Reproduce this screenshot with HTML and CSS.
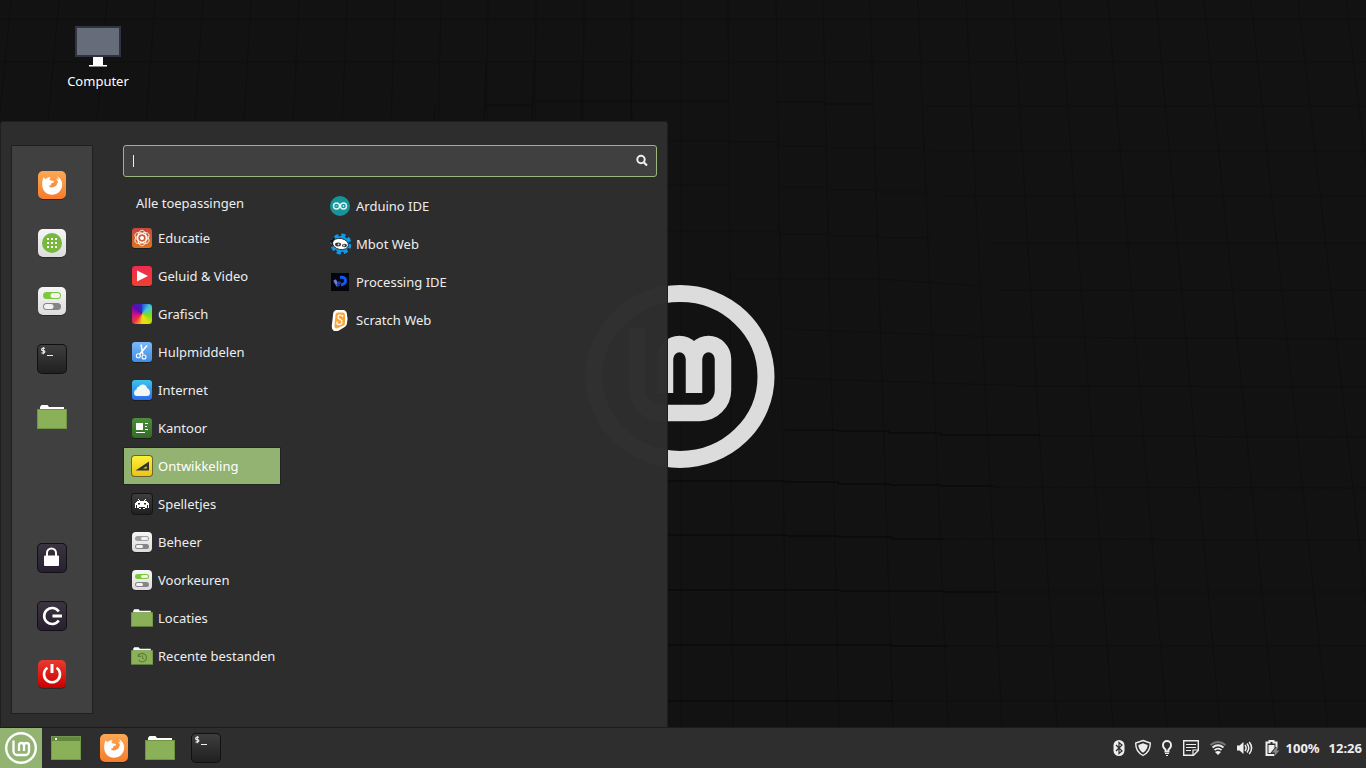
FILE: index.html
```html
<!DOCTYPE html>
<html lang="nl">
<head>
<meta charset="utf-8">
<title>Bureaublad</title>
<link rel="stylesheet" href="styles.css">
</head>
<body>
<svg class="defs" aria-hidden="true">
  <defs>
    <linearGradient id="g-orange" x1="0" y1="0" x2="0" y2="1"><stop offset="0" stop-color="#fca854"/><stop offset="1" stop-color="#f67c2c"/></linearGradient>
    <linearGradient id="g-light" x1="0" y1="0" x2="0" y2="1"><stop offset="0" stop-color="#f6f6f6"/><stop offset="1" stop-color="#dcdcdc"/></linearGradient>
    <linearGradient id="g-dark" x1="0" y1="0" x2="0" y2="1"><stop offset="0" stop-color="#3e3e3e"/><stop offset="1" stop-color="#202020"/></linearGradient>
    <linearGradient id="g-violet" x1="0" y1="0" x2="0" y2="1"><stop offset="0" stop-color="#3a3340"/><stop offset="1" stop-color="#28202e"/></linearGradient>
    <linearGradient id="g-red" x1="0" y1="0" x2="0" y2="1"><stop offset="0" stop-color="#ea3a2e"/><stop offset="1" stop-color="#c90000"/></linearGradient>
    <linearGradient id="g-edu" x1="0" y1="0" x2="0" y2="1"><stop offset="0" stop-color="#c8473c"/><stop offset="1" stop-color="#dc7422"/></linearGradient>
    <linearGradient id="g-media" x1="0" y1="0" x2="0" y2="1"><stop offset="0" stop-color="#ee2a50"/><stop offset="1" stop-color="#f04030"/></linearGradient>
    <linearGradient id="g-tools" x1="0" y1="0" x2="0" y2="1"><stop offset="0" stop-color="#7ab8fa"/><stop offset="1" stop-color="#3f8ee0"/></linearGradient>
    <linearGradient id="g-net" x1="0" y1="0" x2="0" y2="1"><stop offset="0" stop-color="#3cc4ea"/><stop offset="1" stop-color="#2a6cf0"/></linearGradient>
    <linearGradient id="g-office" x1="0" y1="0" x2="0" y2="1"><stop offset="0" stop-color="#4a8e3a"/><stop offset="1" stop-color="#336a28"/></linearGradient>
    <linearGradient id="g-dev" x1="0" y1="0" x2="0" y2="1"><stop offset="0" stop-color="#fdf03a"/><stop offset="1" stop-color="#ecc418"/></linearGradient>
    <symbol id="i-firefox" viewBox="0 0 32 32">
      <rect x="2" y="3" width="28" height="28" rx="5" fill="#1c1c1c" opacity=".6"/>
      <rect x="2" y="2" width="28" height="28" rx="5" fill="url(#g-orange)"/>
      <path fill="#fff" d="M7.600 8.300L9.500 10.200C11 8.800 12.600 8.200 14.600 8.400C13.800 9.400 13.500 10.400 13.800 11.200L18 12C18.200 13.200 16.800 14 15.200 14.600L15 16.200C13.800 16 12.800 16.600 13.200 17.600C14.400 19 17 18.800 18.600 17.600C20.400 17 21.400 15.400 21 13.600L22 14.600C22.200 12 21 10.400 19.800 9.400C21 9.500 22 10.200 22.600 11C22.600 9.400 21.800 8.200 20.800 7.200C23.800 8.400 26.400 11.800 26.200 16C26 21.500 21.500 25.800 16 25.800C10.500 25.800 6.300 21.500 6.200 16C6 13 6.700 10.500 7.600 8.300Z"/>
    </symbol>
    <symbol id="i-toggles" viewBox="0 0 32 32">
      <rect x="2" y="3" width="28" height="28" rx="5" fill="#1c1c1c" opacity=".6"/>
      <rect x="2" y="2" width="28" height="28" rx="5" fill="url(#g-light)"/>
      <rect x="7" y="7" width="18" height="7" rx="3.500" fill="currentColor"/>
      <rect x="14.500" y="8" width="9.500" height="5" rx="2.500" fill="#f2f2f2"/>
      <rect x="7" y="18" width="18" height="7" rx="3.500" fill="#858585"/>
      <rect x="8" y="19" width="9.500" height="5" rx="2.500" fill="#f2f2f2"/>
    </symbol>
    <symbol id="i-toggles-small" viewBox="0 0 22 22">
      <rect x="1" y="2" width="20" height="20" rx="4" fill="#1c1c1c" opacity=".7"/>
      <rect x="1" y="1" width="20" height="20" rx="4" fill="url(#g-light)"/>
      <rect x="4" y="5" width="14" height="5" rx="2.500" fill="currentColor"/>
      <rect x="10" y="6" width="7" height="3" rx="1.500" fill="#f2f2f2"/>
      <rect x="4" y="13" width="14" height="5" rx="2.500" fill="#858585"/>
      <rect x="5" y="14" width="7" height="3" rx="1.500" fill="#f2f2f2"/>
    </symbol>
    <symbol id="i-terminal" viewBox="0 0 32 32">
      <rect x="1" y="1" width="30" height="30" rx="5" fill="#111"/>
      <rect x="2" y="2" width="28" height="28" rx="4" fill="url(#g-dark)"/>
      <path d="M9 5.200H6.800Q5.600 5.200 5.600 6.400T6.800 7.600H7.700Q8.900 7.600 8.900 8.800T7.700 10H5.400M7.300 4V11.200M11 12.500H17" fill="none" stroke="#eee" stroke-width="1.100"/>
    </symbol>
    <symbol id="i-folder" viewBox="0 0 32 32">
      <path d="M4 10V6L5.500 4H11.500L13 6H28V10Z" fill="#fff"/>
      <path d="M1 8H31V28H1Z" fill="#6f9444"/>
      <path d="M2 9H30V27H2Z" fill="#8bb158"/>
    </symbol>
    <symbol id="i-mint" viewBox="0 0 190 184">
      <ellipse cx="95" cy="92.500" rx="86" ry="83" fill="none" stroke="currentColor" stroke-width="17"/>
      <path d="M80 109V75a14.500 15 0 0 1 29 0V109M109 75a14.500 15 0 0 1 29 0V106a23 23 0 0 1-23 23H76a24 24 0 0 1-24-24V44" fill="none" stroke="currentColor" stroke-width="16.500"/>
    </symbol>
  </defs>
</svg>

<main class="desktop">
  <svg class="wallpaper" viewBox="0 0 1366 768" preserveAspectRatio="xMidYMid slice" aria-hidden="true">
    <rect width="1366" height="768" fill="#121212"/>
    <g fill="none" stroke="#0f0f0f">
      <path d="M11 0L-60 726M59 0L-7 726M107 0L48 726M155 0L102 726M203 0L156 726M251 0L210 726M299 0L264 726M347 0L318 726M395 0L372 726M441 0L426 726M488 0L480 726M536 0L530 726M584 0L580 726M632 0L630 726M681 0L681 726M728 0L733 726M776 0L787 726M823 0L839 726M870 0L893 726M918 0L948 726M966 0L1002 726M1013 0L1057 726M1060 0L1113 726M1108 0L1167 726M1156 0L1220 726M1204 0L1275 726M1251 0L1328 726M1298 0L1380 726M1346 0L1434 726"/>
      <path d="M0 19H1366M0 62H1366M925 106H1366M930 151H1366M940 196H1366M990 243H1366M1000 290H1366M784 329L1000 337L1366 339M784 378L1030 386L1366 387M1040 436L1366 437M994 487L1366 488M944 539L1366 540M998 592H1366M948 646H1366M893 701H1366"/>
    </g>
    <g fill="none" stroke="#0c0c0c">
      <path d="M486 62L484 121M534 60L532 121M582 60L581 121M631 58V121M435 106L434 121M484 105H532M532 101H728M776 102H824V104H872"/>
      <path d="M668 141H728M728 142H778M778 146H828M828 148H925M668 185H728M779 187H829M829 190H879M879 192H928M668 231H780V234H830V236H880V238H932M733 279H880L980 286" stroke="#0e0e0e"/>
      <path d="M785 430H837V431H889V433H941V435H1040" stroke="#090909"/>
    </g>
    <g fill="none" stroke="#070707">
      <path d="M668 481H785V482H838V484H890V485H942V486H994M668 535H787V536H839V537H892V539H944M668 590H840V591H944V592H998M668 645H892V646H948M668 701H893"/>
    </g>
    <use href="#i-mint" x="585" y="284" width="190" height="184" color="#dcdcdc"/>
  </svg>

  <a class="desktop-icon" href="#computer">
    <svg width="48" height="48" viewBox="0 0 48 48" aria-hidden="true">
      <rect x="1" y="4" width="46" height="31" fill="#303440"/>
      <rect x="3" y="6" width="42" height="27" fill="#666c7a"/>
      <path d="M19 35H29V43H33V44.500H15V43H19Z" fill="#fff"/>
    </svg>
    <span>Computer</span>
  </a>

  <section class="menu" aria-label="Menu">
    <aside class="sidebar">
      <div class="sidebar-group">
        <button class="launcher" aria-label="Firefox"><svg class="icon-l"><use href="#i-firefox"/></svg></button>
        <button class="launcher" aria-label="Programmabeheer">
          <svg class="icon-l" viewBox="0 0 32 32">
            <rect x="2" y="3" width="28" height="28" rx="5" fill="#1c1c1c" opacity=".6"/>
            <rect x="2" y="2" width="28" height="28" rx="5" fill="url(#g-light)"/>
            <circle cx="16" cy="16" r="10" fill="#78b83e"/>
            <path d="M11 12H21M11 16H21M11 20H21" stroke="#fff" stroke-width="2" stroke-dasharray="2 2"/>
          </svg>
        </button>
        <button class="launcher green" aria-label="Systeeminstellingen"><svg class="icon-l"><use href="#i-toggles"/></svg></button>
        <button class="launcher" aria-label="Terminal"><svg class="icon-l"><use href="#i-terminal"/></svg></button>
        <button class="launcher" aria-label="Bestanden"><svg class="icon-l"><use href="#i-folder"/></svg></button>
      </div>
      <div class="sidebar-group">
        <button class="launcher" aria-label="Scherm vergrendelen">
          <svg class="icon-l" viewBox="0 0 32 32">
            <rect x="1" y="1" width="30" height="30" rx="5" fill="#141018"/>
            <rect x="2" y="2" width="28" height="28" rx="4" fill="url(#g-violet)"/>
            <path d="M11 14V11a4.500 4.500 0 0 1 9 0V14" fill="none" stroke="#fff" stroke-width="2"/>
            <rect x="8" y="13.500" width="15" height="10.500" rx="1" fill="#fff"/>
          </svg>
        </button>
        <button class="launcher" aria-label="Afmelden">
          <svg class="icon-l" viewBox="0 0 32 32">
            <rect x="1" y="1" width="30" height="30" rx="5" fill="#141018"/>
            <rect x="2" y="2" width="28" height="28" rx="4" fill="url(#g-violet)"/>
            <path d="M22.800 11.500A8 8 0 1 0 22.800 20.500" fill="none" stroke="#fff" stroke-width="2.600"/>
            <path d="M16.500 16H26" stroke="#fff" stroke-width="3"/>
          </svg>
        </button>
        <button class="launcher" aria-label="Afsluiten">
          <svg class="icon-l" viewBox="0 0 32 32">
            <rect x="2" y="3" width="28" height="28" rx="5" fill="#1c1c1c" opacity=".6"/>
            <rect x="2" y="2" width="28" height="28" rx="5" fill="url(#g-red)"/>
            <path d="M11.500 9.700A8 8 0 1 0 20.500 9.700" fill="none" stroke="#fff" stroke-width="2.600"/>
            <path d="M16 6V15" stroke="#fff" stroke-width="3"/>
          </svg>
        </button>
      </div>
    </aside>

    <div class="pane">
      <label class="search">
        <span class="caret"></span>
        <input type="text" aria-label="Zoeken">
        <svg width="16" height="16" viewBox="0 0 16 16" aria-hidden="true"><circle cx="7" cy="6.500" r="3.700" fill="none" stroke="#eee" stroke-width="2"/><path d="M9.700 9.200L13 12.500" stroke="#eee" stroke-width="2.200"/></svg>
      </label>
      <div class="lists">
        <nav class="categories" aria-label="Categorieën">
          <button class="entry entry-all">Alle toepassingen</button>
          <button class="entry">
            <svg class="icon-s" viewBox="0 0 22 22"><rect x="1" y="1" width="20" height="21" rx="3" fill="#1d1d1d"/><rect x="1" y="1" width="20" height="20" rx="3" fill="url(#g-edu)"/><circle cx="11" cy="11" r="2" fill="#fff"/><circle cx="11" cy="11" r="4.400" fill="none" stroke="#fff" stroke-width="1.200"/><g fill="none" stroke="#fff" stroke-width=".8"><ellipse cx="11" cy="11" rx="4.400" ry="7.800"/><ellipse cx="11" cy="11" rx="4.400" ry="7.800" transform="rotate(60 11 11)"/><ellipse cx="11" cy="11" rx="4.400" ry="7.800" transform="rotate(120 11 11)"/></g></svg>
            Educatie</button>
          <button class="entry">
            <svg class="icon-s" viewBox="0 0 22 22"><rect x="1" y="1" width="20" height="21" rx="3" fill="#1d1d1d"/><rect x="1" y="1" width="20" height="20" rx="3" fill="url(#g-media)"/><path d="M6 5.500L17 11L6 16.500Z" fill="#fff"/></svg>
            Geluid &amp; Video</button>
          <button class="entry"><span class="icon-s rainbow"></span>Grafisch</button>
          <button class="entry">
            <svg class="icon-s" viewBox="0 0 22 22"><rect x="1" y="1" width="20" height="21" rx="3" fill="#1d1d1d"/><rect x="1" y="1" width="20" height="20" rx="3" fill="url(#g-tools)"/><path d="M10 3.500L11.800 13.500M16 4.500L8.500 13.500" stroke="#fff" stroke-width="1.500"/><circle cx="7.300" cy="14.800" r="2" fill="none" stroke="#fff" stroke-width="1.100"/><circle cx="13" cy="16" r="2" fill="none" stroke="#fff" stroke-width="1.100"/></svg>
            Hulpmiddelen</button>
          <button class="entry">
            <svg class="icon-s" viewBox="0 0 22 22"><rect x="1" y="1" width="20" height="21" rx="3" fill="#1d1d1d"/><rect x="1" y="1" width="20" height="20" rx="3" fill="url(#g-net)"/><path d="M6 17Q3 17 3 14Q3 11 5.500 10.500Q5.500 8 8 7.500Q9.500 5 12.500 5.500Q15.500 6 16 9Q19 10.500 19 13.500Q19 17 16 17Z" fill="#f4f6f6"/></svg>
            Internet</button>
          <button class="entry">
            <svg class="icon-s" viewBox="0 0 22 22"><rect x="1" y="1" width="20" height="21" rx="3" fill="#1d1d1d"/><rect x="1" y="1" width="20" height="20" rx="3" fill="url(#g-office)"/><path d="M5 6H12V13H5Z" fill="#fff"/><path d="M14 6.500H17M14 9.500H16M14 12.500H17M5 15.500H14" stroke="#fff"/></svg>
            Kantoor</button>
          <button class="entry entry-selected">
            <svg class="icon-s" viewBox="0 0 22 22"><rect width="22" height="22" rx="4" fill="#6c6330"/><rect x="1" y="1" width="20" height="20" rx="3" fill="url(#g-dev)"/><path fill-rule="evenodd" d="M4.500 15.500L18 6.500V15.500ZM12 13.500H15.700V11.200Z" fill="#333"/></svg>
            Ontwikkeling</button>
          <button class="entry">
            <svg class="icon-s" viewBox="0 0 22 22"><rect width="22" height="22" rx="4" fill="#151515"/><rect x="1" y="1" width="20" height="20" rx="3" fill="url(#g-dark)"/><path fill-rule="evenodd" d="M7 6H8V7H9V8H13V7H14V6H15V7H14V8H16V9H17V10H18V15H17V12H16V15H14V16H12V15H14V14H8V15H10V16H8V15H6V12H5V15H4V10H5V9H6V8H8V7H7ZM7 10V11.500H9V10ZM13 10V11.500H15V10Z" fill="#fff"/></svg>
            Spelletjes</button>
          <button class="entry grey"><svg class="icon-s"><use href="#i-toggles-small"/></svg>Beheer</button>
          <button class="entry green"><svg class="icon-s"><use href="#i-toggles-small"/></svg>Voorkeuren</button>
          <button class="entry"><svg class="icon-s" viewBox="1 1 30 30"><use href="#i-folder" width="32" height="32"/></svg>Locaties</button>
          <button class="entry">
            <svg class="icon-s" viewBox="1 1 30 30"><use href="#i-folder" width="32" height="32"/><path d="M11 16A5.800 5.800 0 1 1 11.500 21.500M11 13V16.500H14.500M16.500 15V18.500L18.500 20" fill="none" stroke="#5c7d38" stroke-width="1.500"/></svg>
            Recente bestanden</button>
        </nav>
        <div class="apps">
          <button class="entry">
            <svg class="icon-s" viewBox="0 0 22 22"><circle cx="11" cy="11" r="10" fill="#159499"/><circle cx="7.500" cy="11" r="3" fill="none" stroke="#e4f4f4" stroke-width="1.400"/><circle cx="14.500" cy="11" r="3" fill="none" stroke="#e4f4f4" stroke-width="1.400"/><path d="M6.500 11H8.500M13.500 11H15.500M14.500 10V12" stroke="#e4f4f4" stroke-width=".7"/></svg>
            Arduino IDE</button>
          <button class="entry">
            <svg class="icon-s" viewBox="0 0 22 22"><circle cx="12" cy="11" r="8" fill="#0d9bea"/><circle cx="12" cy="11" r="8.500" fill="none" stroke="#0d9bea" stroke-width="4" stroke-dasharray="4 2.675"/><path d="M1 8L5 5L7 8L4 12Z" fill="#111"/><ellipse cx="11.500" cy="11" rx="8" ry="5.500" transform="rotate(12 11.500 11)" fill="#fff" stroke="#111" stroke-width=".8"/><ellipse cx="9" cy="11.500" rx="3" ry="1.900" fill="#333"/><ellipse cx="15.500" cy="12.500" rx="2.500" ry="1.800" fill="#333"/><circle cx="9.500" cy="11.500" r=".9" fill="#ddd"/><circle cx="15" cy="12.500" r=".9" fill="#ddd"/></svg>
            Mbot Web</button>
          <button class="entry">
            <svg class="icon-s" viewBox="0 0 22 22"><rect x="2" y="2" width="18" height="18" fill="#04040c"/><path d="M5.500 9L9 15" stroke="#6d7ce0" stroke-width="3"/><path d="M8.500 15L11 10.500" stroke="#203a9a" stroke-width="3"/><path d="M11 6.500Q16.500 5.500 16.500 9.500Q16.500 13 12 14" fill="none" stroke="#0a5cf5" stroke-width="3"/></svg>
            Processing IDE</button>
          <button class="entry">
            <svg class="icon-s" viewBox="0 0 22 22"><path d="M7 1H15Q18 2 18 6Q19 9 18 14Q18 17 14 19L9 22H5Q2 20 3 15L4 6Q4 2 7 1Z" fill="#fff"/><path d="M8.500 3.500H14Q16.500 4 16 8V14Q16 16.500 12 17.500L8 19.500Q5 19.500 5.500 16L6.500 6Q6.500 4 8.500 3.500Z" fill="#fba63c"/><path d="M13.500 8V6.500Q9 5 9 8Q9 10 11.500 10.500Q13.500 12 13 13.500Q12 16.500 8 15V12.500" fill="none" stroke="#fff" stroke-width="1.200"/></svg>
            Scratch Web</button>
        </div>
      </div>
    </div>
  </section>
</main>

<footer class="taskbar">
  <button class="start" aria-label="Menu">
    <svg width="34" height="34" viewBox="0 0 34 34"><circle cx="17" cy="17" r="14.800" fill="none" stroke="#fff" stroke-width="2.400"/><path d="M15 20V14.500a2.500 2.500 0 0 1 5 0V20M20 14.500a2.500 2.500 0 0 1 5 0V20a4 4 0 0 1-4 4H13.500a4 4 0 0 1-4-4V9.500" fill="none" stroke="#fff" stroke-width="2.300"/></svg>
  </button>
  <div class="quick">
    <button class="launcher show-desktop" aria-label="Bureaublad tonen"><svg class="icon-l" viewBox="0 0 32 32"><rect x="1" y="4" width="30" height="24" fill="#719848"/><rect x="2" y="5" width="28" height="4" fill="#64863f"/><rect x="2" y="9" width="28" height="18" fill="#8bb158"/><rect x="5" y="6" width="2" height="2" fill="#fff"/></svg></button>
    <button class="launcher" aria-label="Firefox"><svg class="icon-l"><use href="#i-firefox"/></svg></button>
    <button class="launcher" aria-label="Bestanden"><svg class="icon-l"><use href="#i-folder"/></svg></button>
    <button class="launcher" aria-label="Terminal"><svg class="icon-l"><use href="#i-terminal"/></svg></button>
  </div>
  <div class="tray">
    <button class="tray-icon" aria-label="Bluetooth"><svg viewBox="0 0 24 24"><rect x="6.500" y="4" width="11" height="16" rx="5.500" fill="#eee"/><path d="M9 9L15 15L12 17.500V6.500L15 9L9 15" fill="none" stroke="#2e2e2e" stroke-width="1.200"/></svg></button>
    <button class="tray-icon" aria-label="Bijwerkbeheer"><svg viewBox="0 0 24 24"><path d="M12 4.500L19.300 7Q19.500 15.500 12 19.500Q4.500 15.500 4.700 7Z" fill="none" stroke="#eee" stroke-width="1.400"/><path d="M12 7.300L16.700 8.900Q16.500 13.800 12 16.700Q7.500 13.800 7.300 8.900Z" fill="#eee"/></svg></button>
    <button class="tray-icon" aria-label="Tips"><svg viewBox="0 0 24 24"><path d="M10.500 15.500V13.500Q8 12 8 9a4 4 0 0 1 8 0Q16 12 13.500 13.500V15.500Z" fill="none" stroke="#eee" stroke-width="1.900"/><path d="M10 17.500H14M11 19.500H13" stroke="#eee"/></svg></button>
    <button class="tray-icon" aria-label="Notities"><svg viewBox="0 0 24 24"><path d="M4.700 4.700H19.300V14.500L14.500 19.300H4.700Z" fill="none" stroke="#eee" stroke-width="1.400"/><path d="M14 19V14H19M7 8.500H17M7 11.500H17M7 14.500H12" fill="none" stroke="#eee" stroke-width="1.200"/></svg></button>
    <button class="tray-icon tray-wide" aria-label="Netwerk"><svg viewBox="0 0 24 24"><path d="M4.500 9Q12 3 19.500 9" fill="none" stroke="#777" stroke-width="2"/><path d="M6.500 11.500Q12 7 17.500 11.500M8.500 14Q12 11.200 15.500 14" fill="none" stroke="#eee" stroke-width="1.800"/><path d="M12 19L9 16Q12 13.800 15 16Z" fill="#eee"/></svg></button>
    <button class="tray-icon tray-wide" aria-label="Volume"><svg viewBox="0 0 24 24"><path d="M4 9.500H6.500L10.500 6V18L6.500 14.500H4Z" fill="#eee"/><path d="M12 9Q14.200 12 12 15M14 7.500Q17.500 12 14 16.500M16.200 6Q21 12 16.200 18" fill="none" stroke="#eee" stroke-width="1.500"/></svg></button>
    <button class="tray-icon tray-wide" aria-label="Batterij"><svg viewBox="0 0 24 24"><path d="M14 19H6.500V6.500H9.500V5H13.500V6.500H16.500V11" fill="none" stroke="#eee" stroke-width="2"/><path d="M8.500 9H14.500V12L10.500 17H8.500Z" fill="#eee"/><path d="M16.500 11L12 16.500H15L13.500 21L19.500 14.500H16.500L18.500 11Z" fill="#888"/></svg></button>
    <span class="battery">100%</span>
    <time class="clock">12:26</time>
  </div>
</footer>
</body>
</html>
```
FILE: styles.css
```css
* {
  box-sizing: border-box;
}

body {
  margin: 0;
  min-height: 100vh;
  display: flex;
  flex-direction: column;
  background: #121212;
  color: #eee;
  font: 13px/18px "Noto Sans", "Open Sans", sans-serif;
}

button {
  margin: 0;
  padding: 0;
  border: 0;
  background: none;
  color: inherit;
  font: inherit;
  text-align: left;
}

svg {
  display: block;
}

.defs {
  position: absolute;
  width: 0;
  height: 0;
}

.desktop {
  position: relative;
  flex: 1;
  padding: 22px 50px;
  overflow: hidden;
}

.wallpaper {
  position: absolute;
  top: 0;
  left: 0;
  width: 100vw;
  height: 100vh;
}

.desktop-icon {
  position: relative;
  display: inline-flex;
  flex-direction: column;
  align-items: center;
  gap: 2px;
  width: 96px;
  color: #fff;
  text-decoration: none;
}

.menu {
  position: absolute;
  left: 0;
  bottom: 0;
  display: flex;
  gap: 30px;
  width: 668px;
  max-width: 100%;
  padding: 23px 10px 13px;
  border: 1px solid #1f1f1f;
  border-bottom: 0;
  border-radius: 3px 3px 0 0;
  background: rgba(46, 46, 46, .99);
}

.sidebar {
  display: flex;
  flex-direction: column;
  justify-content: space-between;
  gap: 109px;
  padding: 23px 24px;
  border: 1px solid #1f1f1f;
  background: #404040;
}

.sidebar-group {
  display: flex;
  flex-direction: column;
  gap: 26px;
}

.icon-l {
  width: 32px;
  height: 32px;
}

.icon-s {
  flex: none;
  width: 22px;
  height: 22px;
}

.green svg {
  color: #7cc83c;
}

.grey svg {
  color: #a0a0a0;
}

.rainbow {
  border: 1px solid #2e2e2e;
  border-radius: 4px;
  background: conic-gradient(#2a4ed0, #40c8e0 45deg, #7ae010 100deg, #e8e010 150deg, #f8d020 180deg, #f03040 225deg, #c01090 270deg, #5a0ca8 315deg, #2a30c8);
}

.pane {
  flex: 1;
  display: flex;
  flex-direction: column;
  gap: 10px;
}

.search {
  display: flex;
  align-items: center;
  height: 32px;
  padding: 0 6px 0 9px;
  border: 1px solid #9ab87c;
  border-radius: 3px;
  background: #404040;
}

.caret {
  width: 1px;
  height: 12px;
  background: #eee;
}

.search input {
  flex: 1;
  min-width: 0;
  padding: 0;
  border: 0;
  outline: 0;
  background: none;
  color: inherit;
  font: inherit;
}

.lists {
  display: flex;
  gap: 40px;
}

.categories,
.apps {
  display: flex;
  flex-direction: column;
}

.categories {
  width: 158px;
}

.entry {
  display: flex;
  align-items: center;
  gap: 5px;
  height: 38px;
  padding: 0 7px;
  border: 1px solid transparent;
  white-space: nowrap;
}

.entry-all {
  height: 32px;
  padding: 0 12px;
}

.entry-selected {
  border-color: #222;
  background: #92b372;
  color: #fff;
}

.taskbar {
  position: relative;
  display: flex;
  align-items: stretch;
  height: 41px;
  border-top: 1px solid #1c1c1c;
  background: #2e2e2e;
}

.start {
  display: flex;
  align-items: center;
  justify-content: center;
  width: 42px;
  background: #92b372;
}

.quick {
  display: flex;
  align-items: center;
  gap: 14px;
  padding: 0 8px;
}

.show-desktop {
  margin-right: 2px;
}

.tray {
  display: flex;
  align-items: center;
  margin-left: auto;
  padding-right: 4px;
  font-weight: 700;
}

.tray-icon svg {
  width: 24px;
  height: 24px;
}

.tray-wide {
  padding-left: 3px;
}

.battery {
  margin-left: 2px;
}

.clock {
  margin-left: 9px;
}
```
